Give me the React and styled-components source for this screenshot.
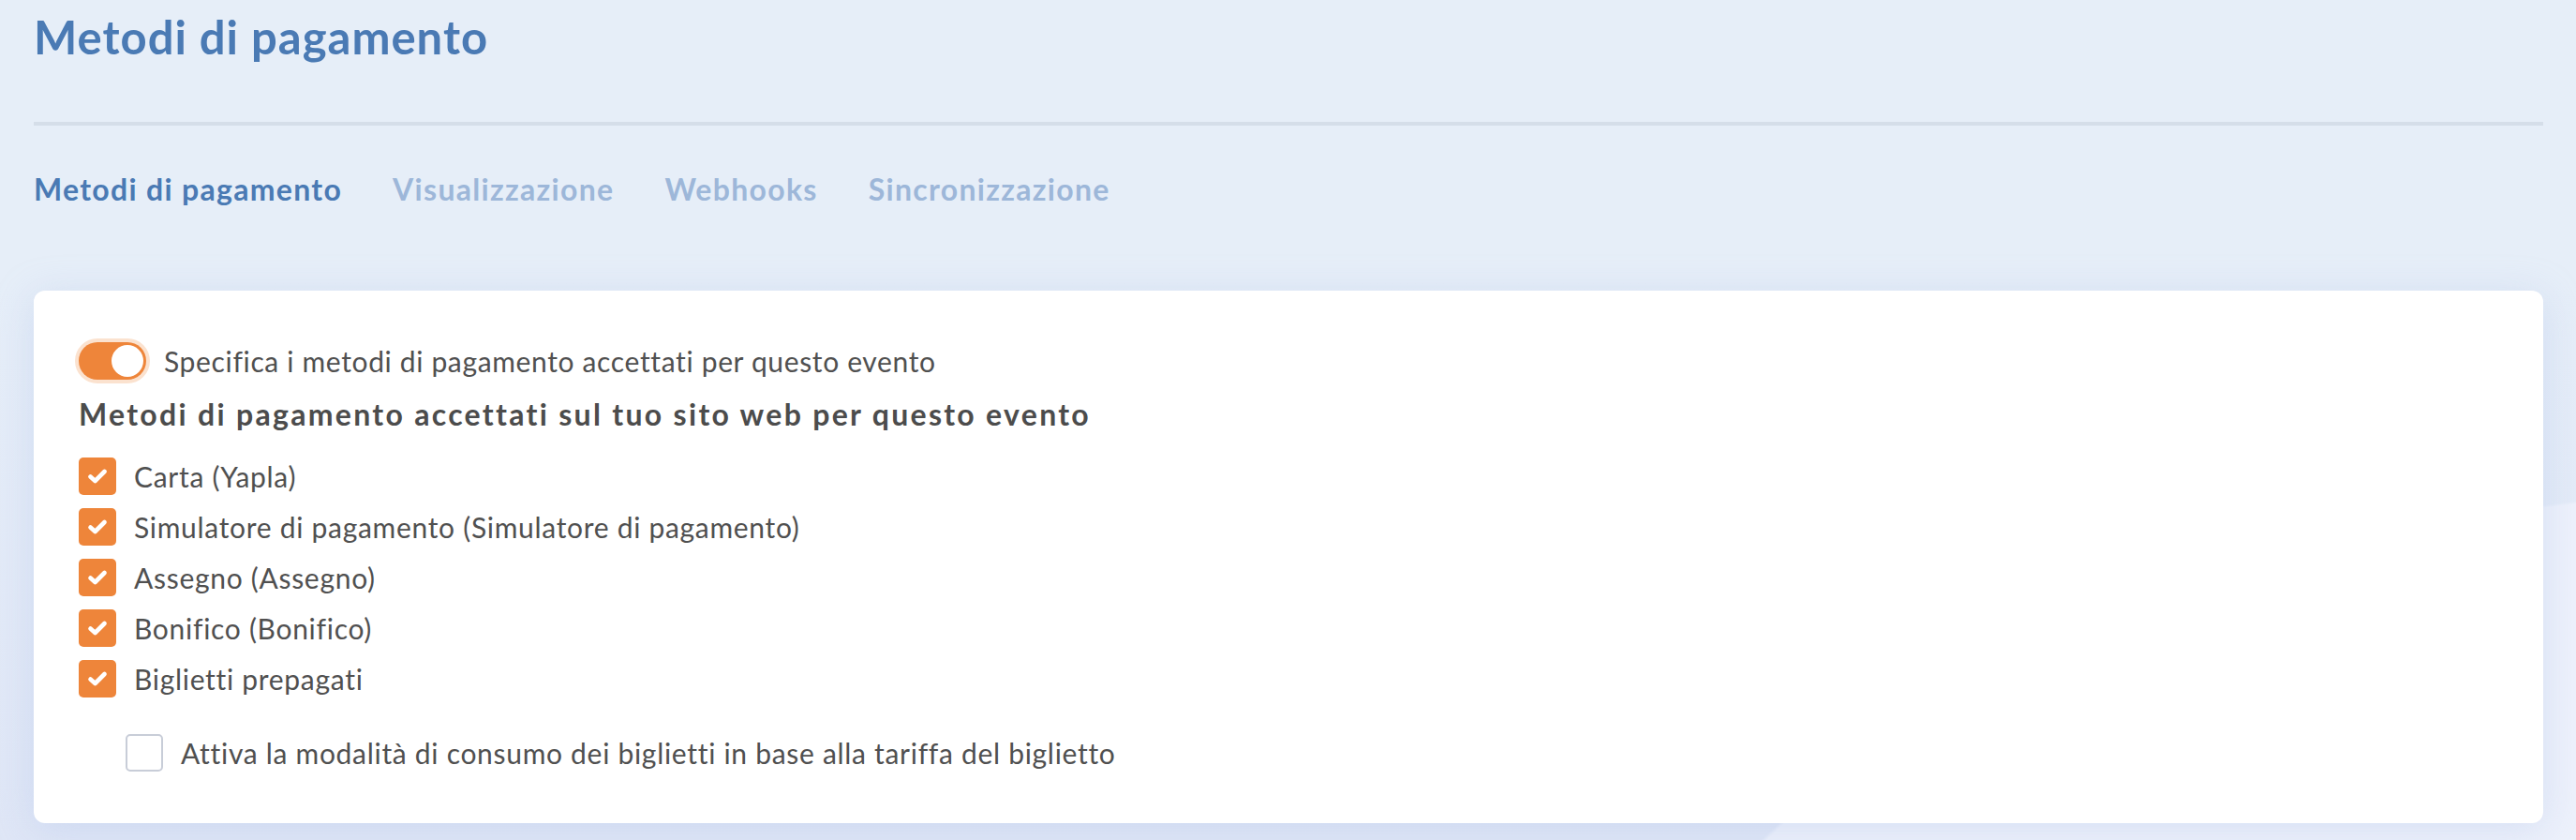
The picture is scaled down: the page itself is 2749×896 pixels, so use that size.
import React from 'react';
import styled, { createGlobalStyle } from 'styled-components';

const GlobalStyle = createGlobalStyle`
  html, body {
    margin: 0;
    padding: 0;
  }
  body {
    font-family: Lato, "Open Sans", sans-serif;
    background: #e5edf8;
  }
`;

const Page = styled.div`
  min-height: 896px;
  box-sizing: border-box;
  padding: 15px 35px 0 36px;
  background-color: #e5edf8;
  background-image: radial-gradient(ellipse 1310px 780px at 3000px 1300px, #edf1fb 99.6%, rgba(237, 241, 251, 0) 100%),
    linear-gradient(to bottom, #e6eef8 0, #e6eef8 300px, #dfe6f6 896px);
  background-repeat: no-repeat;
`;

const Title = styled.h1`
  margin: 0;
  font-size: 49px;
  line-height: 1;
  font-weight: 700;
  letter-spacing: 1px;
  color: #4a7ab4;
`;

const Divider = styled.hr`
  margin: 66px 0 0;
  border: 0;
  height: 4px;
  background: #d5dee9;
`;

const Tabs = styled.nav`
  display: flex;
  gap: 54px;
  margin-top: 52px;
`;

const Tab = styled.a`
  font-size: 32px;
  line-height: 1;
  font-weight: 700;
  letter-spacing: 1.3px;
  color: ${p => (p.active ? '#4a7ab4' : '#9db7d9')};
  text-decoration: none;
  cursor: pointer;
`;

const Card = styled.section`
  margin-top: 92px;
  background: #fff;
  border-radius: 12px;
  padding: 55px 48px 55px 48px;
  box-shadow: 0 6px 40px rgba(170, 188, 232, 0.35);
`;

const ToggleRow = styled.label`
  display: flex;
  align-items: center;
  gap: 19px;
  font-size: 30px;
  letter-spacing: 0.65px;
  color: #505050;
`;

const Switch = styled.span`
  position: relative;
  width: 72px;
  height: 40px;
  border-radius: 20px;
  background: ${p => (p.on ? '#ee853a' : '#c9d0db')};
  box-shadow: 0 0 0 4px ${p => (p.on ? '#fbe2cf' : 'transparent')};
  flex-shrink: 0;

  &::after {
    content: '';
    position: absolute;
    top: 3px;
    left: ${p => (p.on ? '35px' : '3px')};
    width: 34px;
    height: 34px;
    border-radius: 50%;
    background: #fff;
  }
`;

const Heading = styled.h2`
  margin: 21px 0 0;
  font-size: 32px;
  line-height: 1;
  font-weight: 700;
  letter-spacing: 2.3px;
  color: #4c4c4c;
`;

const List = styled.div`
  display: flex;
  flex-direction: column;
  gap: 14px;
  margin-top: 30px;
`;

const Option = styled.label`
  display: flex;
  align-items: center;
  gap: 19px;
  font-size: 30px;
  letter-spacing: 0.7px;
  color: #505050;
  margin-left: ${p => (p.indent ? '50px' : '0')};
  margin-top: ${p => (p.indent ? '25px' : '0')};
`;

const Box = styled.span`
  width: 40px;
  height: 40px;
  box-sizing: border-box;
  border-radius: 5px;
  flex-shrink: 0;
  display: flex;
  align-items: center;
  justify-content: center;
  background: ${p => (p.checked ? '#ee853a' : '#fff')};
  border: ${p => (p.checked ? 'none' : '2px solid #c8cdd8')};
`;

const Check = () => (
  <svg width="22" height="18" viewBox="0 0 22 18">
    <path d="M3.5 9.5 L8.5 14 L18.5 4" fill="none" stroke="#fff" strokeWidth="4.6" strokeLinecap="round" strokeLinejoin="round" />
  </svg>
);

const Checkbox = ({ checked, label, indent }) => (
  <Option indent={indent}>
    <Box checked={checked}>{checked && <Check />}</Box>
    {label}
  </Option>
);

const methods = [
  'Carta (Yapla)',
  'Simulatore di pagamento (Simulatore di pagamento)',
  'Assegno (Assegno)',
  'Bonifico (Bonifico)',
  'Biglietti prepagati',
];

export default function App() {
  return (
    <Page>
      <GlobalStyle />
      <Title>Metodi di pagamento</Title>
      <Divider />
      <Tabs>
        <Tab active>Metodi di pagamento</Tab>
        <Tab>Visualizzazione</Tab>
        <Tab>Webhooks</Tab>
        <Tab>Sincronizzazione</Tab>
      </Tabs>
      <Card>
        <ToggleRow>
          <Switch on />
          Specifica i metodi di pagamento accettati per questo evento
        </ToggleRow>
        <Heading>Metodi di pagamento accettati sul tuo sito web per questo evento</Heading>
        <List>
          {methods.map(m => (
            <Checkbox key={m} checked label={m} />
          ))}
          <Checkbox indent label="Attiva la modalità di consumo dei biglietti in base alla tariffa del biglietto" />
        </List>
      </Card>
    </Page>
  );
}
